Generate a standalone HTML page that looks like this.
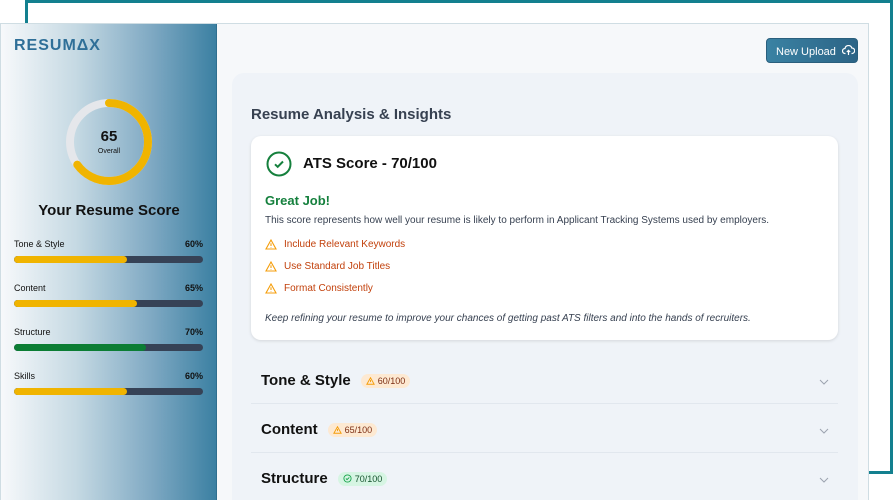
<!DOCTYPE html>
<html><head><meta charset="utf-8"><style>
*{margin:0;padding:0;box-sizing:border-box}
html,body{width:895px;height:500px;overflow:hidden}
body{background:#fff;position:relative;font-family:"Liberation Sans",sans-serif;color:#111}
.frame{position:absolute;left:25px;top:0;width:868px;height:474px;border:3px solid #13808f;border-bottom:none}
.fb{position:absolute;left:862px;top:471px;width:31px;height:3px;background:#13808f}
.win{position:absolute;left:0;top:23px;width:869px;height:477px;background:#f6f8fa;border:1px solid #cfdde3;border-bottom:none;overflow:hidden}
.side{position:absolute;left:0;top:0;width:216px;height:476px;background:linear-gradient(90deg,#f7f9fb 0%,#c5d9e3 35%,#7fa9c3 70%,#3b80a2 100%);border-right:1px solid #2f6f8f}
.logo{position:absolute;left:13px;top:13px;font-weight:bold;font-size:16px;letter-spacing:1px;color:#2f6f98}
.ring{position:absolute;left:64px;top:74px}
.sc{position:absolute;left:0;width:216px;text-align:center}
.lab{position:absolute;left:13px;width:189px;font-size:9px;display:flex;justify-content:space-between}
.lab b{font-weight:bold}
.bar{position:absolute;left:13px;width:189px;height:7px;border-radius:4px;background:#364256;overflow:hidden}
.bar i{display:block;height:100%;border-radius:4px}
.btn{position:absolute;left:765px;top:14px;width:92px;height:25px;border-radius:4px;background:linear-gradient(90deg,#3a82a3,#2c6486);color:#fff;font-size:11px;padding:6px 0 0 9px;border:1px solid #2a5f7d}
.card{position:absolute;left:231px;top:49px;width:626px;height:427px;background:#eff3f8;border-radius:12px 12px 0 0}
.h{position:absolute;left:19px;top:33px;font-size:15px;font-weight:bold;color:#374151}
.wc{position:absolute;left:19px;top:63px;width:587px;height:204px;background:#fff;border-radius:10px;box-shadow:0 1px 3px rgba(0,0,0,.12)}
.t{position:absolute;white-space:nowrap}
.it{position:absolute;left:14px;font-size:10px;color:#c2410c;display:flex;align-items:center}
.it svg{margin-right:7px}
.acc{position:absolute;left:29px;font-size:15px;font-weight:bold;display:flex;align-items:center}
.pill{margin-left:10px;font-size:9px;font-weight:normal;padding:2px 5px;border-radius:8px;display:flex;align-items:center;gap:3px}
.div{position:absolute;left:19px;width:587px;height:1px;background:#e1e7ee}
.chev{position:absolute;left:587px}
</style></head><body>
<div class="frame"></div><div class="fb"></div>
<div class="win">
<div class="side">
<div class="logo">RESUM&#916;X</div>
<svg class="ring" width="88" height="88" viewBox="0 0 88 88"><circle cx="44" cy="44" r="39" fill="none" stroke="#e5e7eb" stroke-width="8"/><circle cx="44" cy="44" r="39" fill="none" stroke="#f0b400" stroke-width="8" stroke-dasharray="159.3 245" transform="rotate(-90 44 44)" stroke-linecap="round"/></svg>
<div class="sc" style="top:104px;font-size:15px;font-weight:bold;left:0">65</div>
<div class="sc" style="top:124px;font-size:7px">Overall</div>
<div class="sc" style="top:178px;font-size:15px;font-weight:bold">Your Resume Score</div>
<div class="lab" style="top:215px"><span>Tone &amp; Style</span><b>60%</b></div>
<div class="bar" style="top:232px"><i style="width:60%;background:#f0b400"></i></div>
<div class="lab" style="top:259px"><span>Content</span><b>65%</b></div>
<div class="bar" style="top:276px"><i style="width:65%;background:#f0b400"></i></div>
<div class="lab" style="top:303px"><span>Structure</span><b>70%</b></div>
<div class="bar" style="top:320px"><i style="width:70%;background:#0b7d34"></i></div>
<div class="lab" style="top:347px"><span>Skills</span><b>60%</b></div>
<div class="bar" style="top:364px"><i style="width:60%;background:#f0b400"></i></div>
</div>
<div class="btn">New Upload <svg width="13" height="11" viewBox="0 0 13 11" style="vertical-align:-1px;margin-left:3px"><path d="M3.5 8.5H3a2.5 2.5 0 0 1 0-5 3.5 3.5 0 0 1 6.8-.5A2.3 2.3 0 0 1 10 8.5h-.5M6.5 10V5.5M4.8 7l1.7-1.7L8.2 7" fill="none" stroke="#fff" stroke-width="1.2"/></svg></div>
<div class="card">
<div class="h">Resume Analysis &amp; Insights</div>
<div class="wc">
<svg class="t" style="left:15px;top:15px" width="26" height="26" viewBox="0 0 26 26"><circle cx="13" cy="13" r="11.5" fill="none" stroke="#15803d" stroke-width="2"/><path d="M9 13.3l2.7 2.5L17 10.5" fill="none" stroke="#15803d" stroke-width="2"/></svg>
<div class="t" style="left:52px;top:19px;font-size:15px;font-weight:bold">ATS Score - 70/100</div>
<div class="t" style="left:14px;top:57px;font-size:13px;font-weight:bold;color:#15803d">Great Job!</div>
<div class="t" style="left:14px;top:79px;font-size:10px;color:#374151">This score represents how well your resume is likely to perform in Applicant Tracking Systems used by employers.</div>
<div class="it" style="top:103px"><svg width="12" height="11" viewBox="0 0 12 11"><path d="M6 1L11 10H1Z M6 4.2V7 M6 8.2v.6" fill="none" stroke="#f59e0b" stroke-width="1.1"/></svg>Include Relevant Keywords</div>
<div class="it" style="top:125px"><svg width="12" height="11" viewBox="0 0 12 11"><path d="M6 1L11 10H1Z M6 4.2V7 M6 8.2v.6" fill="none" stroke="#f59e0b" stroke-width="1.1"/></svg>Use Standard Job Titles</div>
<div class="it" style="top:147px"><svg width="12" height="11" viewBox="0 0 12 11"><path d="M6 1L11 10H1Z M6 4.2V7 M6 8.2v.6" fill="none" stroke="#f59e0b" stroke-width="1.1"/></svg>Format Consistently</div>
<div class="t" style="left:14px;top:177px;font-size:10px;font-style:italic;color:#374151">Keep refining your resume to improve your chances of getting past ATS filters and into the hands of recruiters.</div>
</div>
<div class="acc" style="top:299px">Tone &amp; Style<span class="pill" style="background:#fde9d2;color:#7c2d12"><svg width="9" height="8" viewBox="0 0 12 11"><path d="M6 1L11 10H1Z M6 4.2V7" fill="none" stroke="#f59e0b" stroke-width="1.3"/></svg>60/100</span></div>
<svg class="chev" style="top:306px" width="10" height="6" viewBox="0 0 10 6"><path d="M1 1l4 4 4-4" fill="none" stroke="#9ca3af" stroke-width="1"/></svg>
<div class="div" style="top:330px"></div>
<div class="acc" style="top:348px">Content<span class="pill" style="background:#fde9d2;color:#7c2d12"><svg width="9" height="8" viewBox="0 0 12 11"><path d="M6 1L11 10H1Z M6 4.2V7" fill="none" stroke="#f59e0b" stroke-width="1.3"/></svg>65/100</span></div>
<svg class="chev" style="top:355px" width="10" height="6" viewBox="0 0 10 6"><path d="M1 1l4 4 4-4" fill="none" stroke="#9ca3af" stroke-width="1"/></svg>
<div class="div" style="top:379px"></div>
<div class="acc" style="top:397px">Structure<span class="pill" style="background:#d6f5e3;color:#14532d"><svg width="9" height="9" viewBox="0 0 10 10"><circle cx="5" cy="5" r="4" fill="none" stroke="#16a34a" stroke-width="1"/><path d="M3.2 5l1.3 1.2L7 3.8" fill="none" stroke="#16a34a" stroke-width="1"/></svg>70/100</span></div>
<svg class="chev" style="top:404px" width="10" height="6" viewBox="0 0 10 6"><path d="M1 1l4 4 4-4" fill="none" stroke="#9ca3af" stroke-width="1"/></svg>
</div>
</div>
</body></html>
